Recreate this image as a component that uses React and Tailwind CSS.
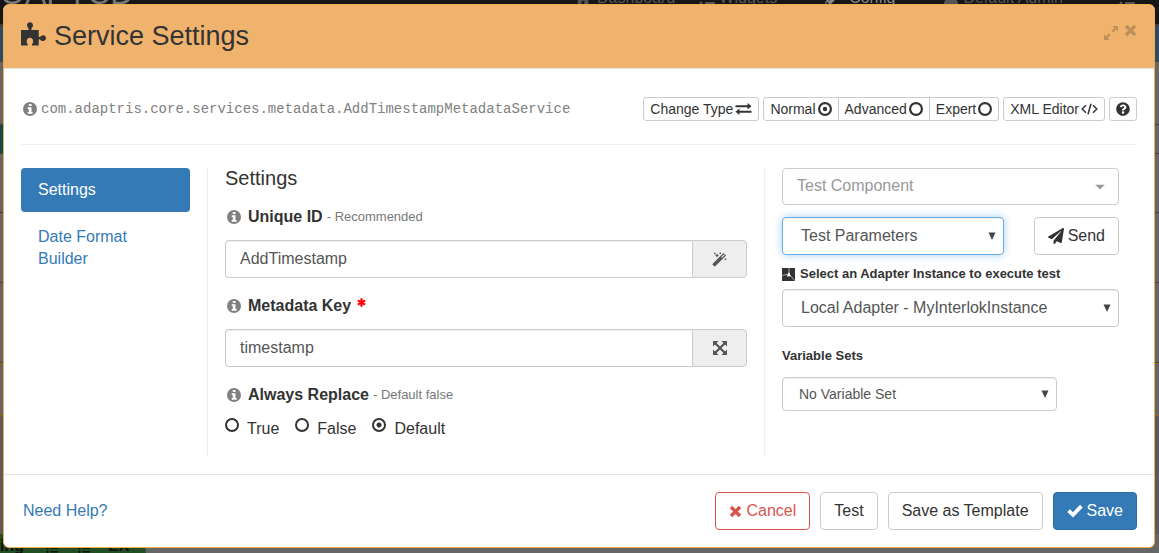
import React from "react";
import {
  FaQuestionCircle,
  FaPaperPlane,
  FaHome,
  FaPencilAlt,
  FaUser,
  FaTasks,
} from "react-icons/fa";

function PuzzleIcon() {
  return (
    <svg viewBox="0 0 25 24" className="h-6 w-[25px]" fill="currentColor" aria-hidden="true">
      <path d="M0 8h6.800c.9 0 1.100-.5.800-1.300C7.200 5.800 6 5 6 3.200 6 1.400 7.300.2 9 .2s3 1.200 3 3c0 1.800-1.200 2.600-1.600 3.500-.3.800-.1 1.300.8 1.300h6.500v6c0 1 .5 1.300 1.200.9.9-.5 1.500-1.700 3.200-1.700 1.700 0 2.900 1.200 2.900 2.900s-1.200 2.900-2.900 2.900c-1.700 0-2.300-1.100-3.200-1.600-.7-.4-1.200-.1-1.200.9V23.500h-6c-.8 0-1-.5-.7-1.200.4-.8 1.100-1.300 1.100-2.900 0-2.300-1.300-3.600-3.200-3.600s-3.200 1.300-3.200 3.600c0 1.600.7 2.100 1.100 2.900.3.700.1 1.200-.7 1.200H0z" />
    </svg>
  );
}

function InfoIcon({ className = "" }) {
  return (
    <svg viewBox="0 0 14 14" className={"h-[14px] w-[14px] shrink-0 text-[#808080] " + className} aria-hidden="true">
      <circle cx="7" cy="7" r="7" fill="currentColor" />
      <path fill="#fff" d="M5.800 2h2.700v2H5.800zM4.700 5.200h3.800v4.900h1.100v1.700H4.700v-1.700h1.100V6.900H4.700z" />
    </svg>
  );
}

function TimesIcon() {
  return (
    <svg viewBox="0 0 13 13" className="h-[13px] w-[13px]" fill="none" stroke="currentColor" strokeWidth="3.400" aria-hidden="true">
      <path d="m2 2 9 9M11 2l-9 9" />
    </svg>
  );
}

function CheckIcon() {
  return (
    <svg viewBox="0 0 16 14" className="h-[14px] w-4" fill="none" stroke="currentColor" strokeWidth="3.800" aria-hidden="true">
      <path d="m1.600 6.600 4.400 4.200 8.400-8.600" />
    </svg>
  );
}

function AsteriskIcon() {
  return (
    <svg viewBox="0 0 10 10" className="mb-2 ml-1.5 h-[9px] w-[9px]" stroke="#f00" strokeWidth="2.400" aria-hidden="true">
      <path d="M5 .2v9.600M.9 2.600l8.200 4.800M9.100 2.600.9 7.400" />
    </svg>
  );
}

function WandIcon() {
  return (
    <svg viewBox="0 0 15 15" className="h-[15px] w-[15px]" aria-hidden="true">
      <path d="M1.500 13.500 12.800 2.200" stroke="currentColor" strokeWidth="3.600" strokeLinecap="butt" />
      <path d="m9.600 5.400 2.800-2.800" stroke="#eee" strokeWidth="1.200" />
      <path
        fill="currentColor"
        d="M2 .8h1.500v1.500H2zM5 1.600l.7 1.200 1.200.7-1.200.7L5 5.400l-.7-1.200-1.200-.7 1.200-.7zM7.500.6H9v1.500H7.500zM12.800 6.500h1.500V8h-1.500z"
      />
    </svg>
  );
}

function ArrowsIcon() {
  return (
    <svg viewBox="0 0 14 14" className="h-[14px] w-[14px]" aria-hidden="true">
      <path d="m2 2 10 10M12 2 2 12" stroke="currentColor" strokeWidth="2.200" />
      <path fill="currentColor" d="M0 0h5.500L0 5.500zM14 0v5.500L8.500 0zM0 14V8.500L5.500 14zM14 14H8.500L14 8.500z" />
    </svg>
  );
}

function ExchangeIcon() {
  return (
    <svg viewBox="0 0 17 12" className="h-3 w-[17px]" fill="currentColor" aria-hidden="true">
      <path d="M.5 2.200h12V0l4 3.200-4 3.200V4.200H.5zM16.500 7.800h-12V5.600l-4 3.200 4 3.200V9.800h12z" />
    </svg>
  );
}

function CodeIcon() {
  return (
    <svg viewBox="0 0 17 12" className="h-3 w-[17px]" fill="none" stroke="currentColor" strokeWidth="1.500" aria-hidden="true">
      <path d="M5 2.200 1.200 6 5 9.800M12 2.200 15.800 6 12 9.800M10 .8 7 11.200" />
    </svg>
  );
}

function ResizeIcon() {
  return (
    <svg viewBox="0 0 14 14" className="h-[14px] w-[14px]" fill="currentColor" aria-hidden="true">
      <path d="M8.500 0H14v5.500l-1.900-1.900-3 3-1.700-1.700 3-3zM5.500 14H0V8.500l1.900 1.900 3-3 1.700 1.700-3 3z" />
    </svg>
  );
}

function CircleIcon({ on }) {
  return (
    <svg viewBox="0 0 14 14" className="h-[14px] w-[14px]" aria-hidden="true">
      <circle cx="7" cy="7" r="5.900" fill="none" stroke="currentColor" strokeWidth="2.200" />
      {on && <circle cx="7" cy="7" r="2.200" fill="currentColor" />}
    </svg>
  );
}

function AdapterIcon() {
  return (
    <svg viewBox="0 0 13 13" className="h-[13px] w-[13px]" aria-hidden="true">
      <path fill="#333" d="M0 0h13v13H0z" />
      <path stroke="#aaa" fill="none" d="M7 0v6L0 7.500M7 6l5.500 6.500" />
      <path fill="#fff" d="m7 4 1.800 4.200-4 .2z" />
    </svg>
  );
}

const smallBtn =
  "flex h-6 items-center gap-0.5 border border-[#ccc] bg-white px-1.5 text-sm whitespace-nowrap text-[#333]";
const btn =
  "flex h-[38px] items-center justify-center gap-1 rounded border px-[13px] text-base whitespace-nowrap";

function Select({ id, label, value, className, wrap, caret = "dark" }) {
  return (
    <div className={"relative " + wrap}>
      <select
        id={id}
        aria-label={label}
        defaultValue={value}
        className={"block w-full appearance-none rounded border bg-white pr-8 outline-none " + className}
      >
        <option>{value}</option>
      </select>
      {caret === "dark" ? (
        <svg viewBox="0 0 8 8" className="pointer-events-none absolute top-1/2 right-2 h-2 w-2 -translate-y-1/2" aria-hidden="true">
          <path fill="#444" d="M.5.500h7L4 8z" />
        </svg>
      ) : (
        <svg viewBox="0 0 10 5" className="pointer-events-none absolute top-1/2 right-[14px] h-[5px] w-[10px] -translate-y-1/2" aria-hidden="true">
          <path fill="#999" d="M0 0h10L5 5z" />
        </svg>
      )}
    </div>
  );
}

function FieldLabel({ htmlFor, note, required, children }) {
  return (
    <div className="mt-4 flex h-6 items-center pl-0.5">
      <InfoIcon className="mr-[7px]" />
      <label htmlFor={htmlFor} className="font-bold">
        {children}
      </label>
      {note && <span className="ml-1 text-[13px] text-[#777]">- {note}</span>}
      {required && <AsteriskIcon />}
    </div>
  );
}

function AddonInput({ id, value, icon, label }) {
  return (
    <div className="mt-[11px] flex h-[38px]">
      <input
        id={id}
        defaultValue={value}
        className="min-w-0 flex-1 rounded-l border border-r-0 border-[#ccc] px-3.5 text-base text-[#555] shadow-[inset_0_1px_1px_rgba(0,0,0,0.075)] outline-none"
      />
      <button
        type="button"
        aria-label={label}
        className="flex w-[55px] items-center justify-center rounded-r border border-[#ccc] bg-[#eee] text-[#555]"
      >
        {icon}
      </button>
    </div>
  );
}

function Backdrop() {
  return (
    <div className="absolute inset-0 flex flex-col overflow-hidden bg-[#666]" aria-hidden="true">
      <div className="relative h-6 bg-[#161616] text-base text-[#555]">
        <span className="absolute -top-[23px] left-0 text-[32px] leading-8 text-[#777]">OAPTCD</span>
        <div className="absolute -top-3 right-6 flex h-5 items-center whitespace-nowrap">
          <FaHome className="mr-1.5" />
          <span className="mr-6">Dashboard</span>
          <FaTasks className="mr-1" />
          <span className="mr-12">Widgets</span>
          <FaPencilAlt className="mr-2 text-[#888]" />
          <span className="mr-12 text-[#888]">Config</span>
          <FaUser className="mr-1" />
          <span className="mr-14">Default Admin</span>
          <FaTasks />
        </div>
      </div>
      <div className="h-[37px] border-t-2 border-[#3c3c3c] bg-[#2b4a63]" />
      <div className="h-16 border-y border-[#444]" />
      <div className="h-7 w-1 bg-[#0f4a4c]" />
      <div className="h-[60px] border-y border-[#444]" />
      <div className="h-[70px] border-b border-[#444]" />
      <div className="h-20 border-b border-[#444]" />
      <div className="h-[53px] border-y border-[#8a6d1f]" />
      <div className="flex-1 bg-[#5b5b5b]" />
      <div className="flex h-5 w-[146px] items-end gap-4 overflow-hidden rounded-tr-full bg-[#224f22] text-base leading-4 font-bold text-[#111]">
        <span>ing</span>
        <FaTasks className="ml-1 h-3" />
        <FaTasks className="h-3" />
        <span>EX</span>
      </div>
    </div>
  );
}

export default function App() {
  return (
    <div className="relative min-h-screen pt-1 pr-1 pb-1.5 pl-[3px] font-['Liberation_Sans',Arial,sans-serif] text-base leading-[22px] text-[#333]">
      <Backdrop />
      <div role="dialog" aria-labelledby="dialog-title" className="relative overflow-hidden rounded-md border border-[#f0ad4e] bg-white">
        <header className="flex h-16 items-center justify-between border-b border-[#e5e5e5] bg-[#f0b36e] pr-[17px] pb-0.5 pl-[17px]">
          <div className="flex items-center gap-2">
            <div className="pb-1">
              <PuzzleIcon />
            </div>
            <h1 id="dialog-title" className="text-[27px] leading-8">
              Service Settings
            </h1>
          </div>
          <div className="mb-2.5 flex items-center gap-1.5 text-[#bd9059]">
            <button type="button" aria-label="Maximise" className="pt-1">
              <ResizeIcon />
            </button>
            <button type="button" aria-label="Close">
              <TimesIcon />
            </button>
          </div>
        </header>

        <main className="px-[17px] pt-7 pb-[17px]">
          <div className="flex items-center justify-between border-b border-[#eee] pb-[23px]">
            <div className="flex items-center gap-1 pl-[2px] font-['Liberation_Mono',monospace] text-sm text-[#808080]">
              <InfoIcon />
              <span>com.adaptris.core.services.metadata.AddTimestampMetadataService</span>
            </div>
            <div className="flex gap-1">
              <button type="button" className={smallBtn + " rounded-[3px]"}>
                Change Type <ExchangeIcon />
              </button>
              <div className="flex" role="group" aria-label="View mode">
                <button type="button" aria-pressed="true" className={smallBtn + " rounded-l-[3px]"}>
                  Normal <CircleIcon on />
                </button>
                <button type="button" aria-pressed="false" className={smallBtn + " border-l-0"}>
                  Advanced <CircleIcon />
                </button>
                <button type="button" aria-pressed="false" className={smallBtn + " rounded-r-[3px] border-l-0"}>
                  Expert <CircleIcon />
                </button>
              </div>
              <button type="button" className={smallBtn + " rounded-[3px]"}>
                XML Editor <CodeIcon />
              </button>
              <button type="button" aria-label="Help" className={smallBtn + " rounded-[3px]"}>
                <FaQuestionCircle className="h-[14px] w-[14px]" />
              </button>
            </div>
          </div>

          <div className="mt-[23px] grid min-h-[289px] grid-cols-12">
            <nav className="col-span-2 pr-[17px]">
              <a href="#settings" className="block rounded bg-[#337ab7] px-[17px] py-[11px] text-white">
                Settings
              </a>
              <a href="#date-format" className="mt-[3px] block px-[17px] py-[11px] text-[#337ab7]">
                Date Format Builder
              </a>
            </nav>

            <section className="col-span-6 border-x border-[#eee] px-[17px]">
              <h2 className="text-xl leading-[21px]">Settings</h2>
              <FieldLabel htmlFor="unique-id" note="Recommended">
                Unique ID
              </FieldLabel>
              <AddonInput id="unique-id" value="AddTimestamp" label="Generate" icon={<WandIcon />} />
              <FieldLabel htmlFor="metadata-key" required>
                Metadata Key
              </FieldLabel>
              <AddonInput id="metadata-key" value="timestamp" label="Expand" icon={<ArrowsIcon />} />
              <FieldLabel note="Default false">Always Replace</FieldLabel>
              <div className="mt-[11px] flex gap-4" role="radiogroup" aria-label="Always Replace">
                {["True", "False", "Default"].map((name) => (
                  <label key={name} className="flex items-start gap-2">
                    <input
                      type="radio"
                      name="replace"
                      defaultChecked={name === "Default"}
                      className="h-[14px] w-[14px] appearance-none rounded-full border-2 border-[#333] checked:bg-[radial-gradient(circle,#333_2px,transparent_3px)]"
                    />
                    {name}
                  </label>
                ))}
              </div>
            </section>

            <section className="col-span-4 pr-[18px] pl-[17px]">
              <Select label="Test Component" value="Test Component" caret="light" wrap="w-full" className="h-[37px] border-[#ccc] pb-0.5 pl-3.5 text-base text-[#999]" />
              <div className="mt-3 flex justify-between">
                <Select
                  label="Test Parameters"
                  value="Test Parameters"
                  wrap="w-[222px]"
                  className="h-[38px] border-[#66afe9] pl-[18px] text-base text-[#555] shadow-[inset_0_1px_1px_rgba(0,0,0,0.075),0_0_8px_rgba(102,175,233,0.6)]"
                />
                <button type="button" className={btn + " border-[#ccc] bg-white"}>
                  <FaPaperPlane className="h-4 w-4" /> Send
                </button>
              </div>
              <label htmlFor="adapter" className="mt-2 mb-1 flex items-center gap-[5px] text-[13px] font-bold">
                <AdapterIcon /> Select an Adapter Instance to execute test
              </label>
              <Select
                id="adapter"
                value="Local Adapter - MyInterlokInstance"
                wrap="w-full"
                className="h-[38px] border-[#ccc] pl-[18px] text-base text-[#555] shadow-[inset_0_1px_1px_rgba(0,0,0,0.075)]"
              />
              <label htmlFor="variables" className="mt-[18px] mb-2.5 block text-[13px] font-bold">
                Variable Sets
              </label>
              <Select
                id="variables"
                value="No Variable Set"
                wrap="w-[275px]"
                className="h-[34px] border-[#ccc] pl-4 text-sm text-[#555] shadow-[inset_0_1px_1px_rgba(0,0,0,0.075)]"
              />
            </section>
          </div>
        </main>

        <footer className="flex items-center justify-between border-t border-[#e5e5e5] px-[17px] py-[17px]">
          <a href="#help" className="pl-0.5 text-[#337ab7]">
            Need Help?
          </a>
          <div className="flex gap-2.5">
            <button type="button" className={btn + " border-[#d9534f] bg-white text-[#d9534f]"}>
              <TimesIcon /> Cancel
            </button>
            <button type="button" className={btn + " border-[#ccc] bg-white"}>
              Test
            </button>
            <button type="button" className={btn + " border-[#ccc] bg-white"}>
              Save as Template
            </button>
            <button type="button" className={btn + " border-[#2e6da4] bg-[#337ab7] text-white"}>
              <CheckIcon /> Save
            </button>
          </div>
        </footer>
      </div>
    </div>
  );
}
